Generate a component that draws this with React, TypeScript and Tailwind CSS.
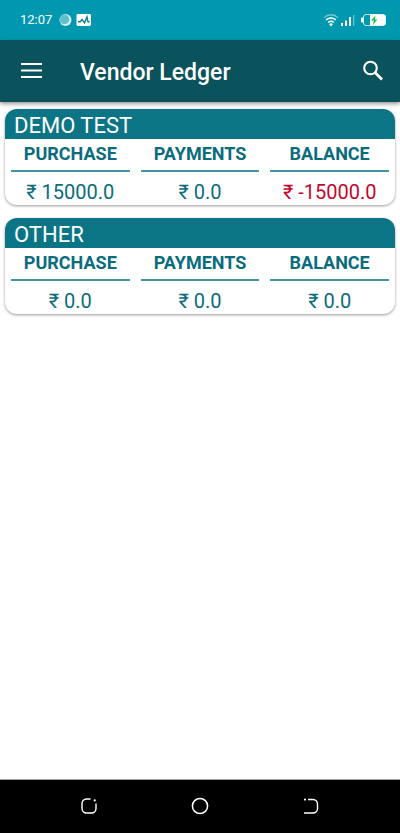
type Vendor = {
  name: string;
  purchase: number;
  payments: number;
  balance: number;
};

const VENDORS: Vendor[] = [
  { name: 'DEMO TEST', purchase: 15000, payments: 0, balance: -15000 },
  { name: 'OTHER', purchase: 0, payments: 0, balance: 0 },
];

const formatAmount = (value: number) => `₹ ${value.toFixed(1)}`;

/** System bar with clock, notifications, signal and battery */
function StatusBar() {
  return (
    <div className="flex h-10 items-center bg-[#0098af] pl-5 pr-3 text-white">
      <span className="text-[13px] leading-5">12:07</span>
      <svg className="ml-1.5 h-3.5 w-3.5" viewBox="0 0 14 14" aria-hidden="true">
        <circle cx="7.5" cy="7" r="6" fill="#d5f1f4" />
        <circle cx="6.4" cy="6.4" r="4.9" fill="#62bfcc" />
      </svg>
      <svg className="ml-1 h-3.5 w-4" viewBox="0 0 16 14" aria-hidden="true">
        <rect x="0.5" y="1" width="14.5" height="12" rx="1.4" fill="#fff" />
        <path d="M2 8.8h2.2L6 6.4l2.5 3.4L11 3.8l1 5h1.6" fill="none" stroke="#0b7f93" strokeWidth="1.4" />
      </svg>
      <svg className="ml-auto h-4 w-4" viewBox="0 0 16 16" fill="none" stroke="#fff" aria-hidden="true">
        <path d="M1 5.6a10 10 0 0 1 14 0" strokeWidth="1.3" opacity="0.45" />
        <path d="M3.1 8a7 7 0 0 1 9.8 0" strokeWidth="1.6" />
        <path d="M5.2 10.5a4 4 0 0 1 5.6 0" strokeWidth="1.6" />
        <path d="M6 12.2 8 14.6l2-2.4a2.8 2.8 0 0 0-4 0z" fill="#fff" stroke="none" />
      </svg>
      <svg className="ml-px h-3.5 w-4" viewBox="0 0 16 14" fill="#fff" aria-hidden="true">
        <rect x="1" y="10" width="2" height="3" />
        <rect x="5" y="7.5" width="2" height="5.5" />
        <rect x="9" y="4" width="2" height="9" />
        <rect x="13" y="2" width="1.3" height="11" opacity="0.4" />
      </svg>
      <svg className="ml-1 h-3.5 w-7" viewBox="0 0 28 14" aria-hidden="true">
        <rect x="1" y="4.5" width="2.5" height="5" rx="1" fill="#fff" />
        <rect x="3.5" y="1.5" width="22" height="11" rx="2.5" fill="#0098af" stroke="#fff" strokeOpacity="0.75" />
        <path d="M10 1.5h13.5a2 2 0 0 1 2 2v7a2 2 0 0 1-2 2H10z" fill="#fff" />
        <path d="m15.6 2.4-4.6 5.2h2.8l-1 4.4 4.6-5.5h-2.7z" fill="#19c24b" />
      </svg>
    </div>
  );
}

function AppBar() {
  return (
    <header className="relative flex h-[62px] items-center bg-[#0a525c] pl-5 pr-[15px] text-white shadow-[0_2px_4px_rgba(0,0,0,0.4)]">
      <button type="button" aria-label="Open menu" className="cursor-pointer">
        <svg className="h-6 w-6" viewBox="0 0 24 24" fill="#fff" aria-hidden="true">
          <rect x="1" y="4" width="21" height="2" />
          <rect x="1" y="10.5" width="21" height="2" />
          <rect x="1" y="17" width="21" height="2" />
        </svg>
      </button>
      <h1 className="ml-9 pt-1 text-[23px] leading-8 font-medium">Vendor Ledger</h1>
      <button type="button" aria-label="Search" className="ml-auto cursor-pointer">
        <svg className="h-6 w-6" viewBox="0 0 24 24" fill="none" stroke="#fff" aria-hidden="true">
          <circle cx="9.5" cy="9" r="6.3" strokeWidth="2.1" />
          <path d="m14 13.5 7 7" strokeWidth="2.6" />
        </svg>
      </button>
    </header>
  );
}

function LedgerColumn({ label, value }: { label: string; value: number }) {
  return (
    <div className="text-center">
      <dt className="h-[33px] border-b-2 border-[#4097a3] text-lg leading-[30px] font-bold text-[#0a6c7c]">
        {label}
      </dt>
      <dd
        className={`h-[33px] pt-1 text-xl leading-8 ${
          value < 0 ? 'text-[#c3062f]' : 'text-[#0a6c7c]'
        }`}
      >
        {formatAmount(value)}
      </dd>
    </div>
  );
}

function VendorCard({ vendor }: { vendor: Vendor }) {
  return (
    <section className="overflow-hidden rounded-xl bg-white shadow-[0_1px_3px_rgba(0,0,0,0.4)]">
      <h2 className="h-[30px] bg-[#0c7585] px-[9px] text-[22px] leading-[33px] text-white">
        {vendor.name}
      </h2>
      <dl className="grid grid-cols-3 gap-[11px] px-1.5">
        <LedgerColumn label="PURCHASE" value={vendor.purchase} />
        <LedgerColumn label="PAYMENTS" value={vendor.payments} />
        <LedgerColumn label="BALANCE" value={vendor.balance} />
      </dl>
    </section>
  );
}

/** Bottom system navigation: recents, home, back */
function NavigationBar() {
  return (
    <nav className="grid h-[54px] grid-cols-[1fr_94px_1fr] items-center border-t border-neutral-400 bg-black px-20 pb-0.5">
      <button type="button" aria-label="Recent apps" className="cursor-pointer justify-self-start">
        <svg className="h-[18px] w-[18px]" viewBox="0 0 18 18" fill="none" stroke="#fff" strokeWidth="1.4" aria-hidden="true">
          <path d="M10.5 2H6.5A4.5 4.5 0 0 0 2 6.5v5A4.5 4.5 0 0 0 6.5 16h5a4.5 4.5 0 0 0 4.5-4.5V6.5" />
          <circle cx="14.7" cy="3.4" r="1.1" fill="#fff" stroke="none" />
        </svg>
      </button>
      <button type="button" aria-label="Home" className="cursor-pointer justify-self-center">
        <svg className="h-[18px] w-[18px]" viewBox="0 0 18 18" fill="none" stroke="#fff" strokeWidth="1.5" aria-hidden="true">
          <circle cx="9" cy="9" r="7.6" />
        </svg>
      </button>
      <button type="button" aria-label="Back" className="cursor-pointer justify-self-end">
        <svg className="h-[18px] w-[18px]" viewBox="0 0 18 18" fill="none" stroke="#fff" strokeWidth="1.4" aria-hidden="true">
          <path d="M6 2.5h5a4.5 4.5 0 0 1 4.5 4.5v4.5A4.5 4.5 0 0 1 11 16H2" />
          <circle cx="3" cy="2.6" r="1.1" fill="#fff" stroke="none" />
        </svg>
      </button>
    </nav>
  );
}

export default function App() {
  return (
    <div className="flex min-h-screen flex-col bg-white font-['Roboto','Noto_Sans',sans-serif]">
      <StatusBar />
      <AppBar />
      <main className="flex flex-1 flex-col gap-[13px] px-[5px] py-[7px]">
        {VENDORS.map((vendor) => (
          <VendorCard key={vendor.name} vendor={vendor} />
        ))}
      </main>
      <NavigationBar />
    </div>
  );
}
